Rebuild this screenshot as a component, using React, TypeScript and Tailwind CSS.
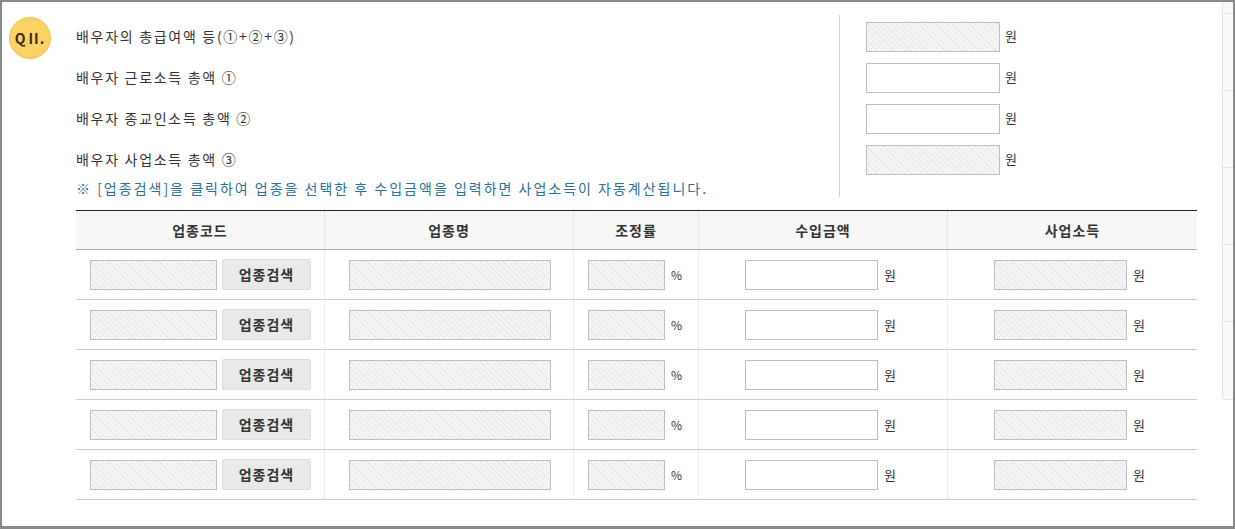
import React from "react";

const font = { fontFamily: '"Noto Sans CJK KR", "Noto Sans", sans-serif' };

function Hatch({ w }: { w: string }) {
  return (
    <div
      className={`${w} h-[30px] border border-[#bdbdbd] bg-[repeating-linear-gradient(45deg,#f4f4f4_0px,#f4f4f4_3px,#e8e8e8_3px,#e8e8e8_4px)]`}
    />
  );
}

function Plain({ w }: { w: string }) {
  return <div className={`${w} h-[30px] border border-[#bdbdbd] bg-white`} />;
}

const labels = [
  "배우자의 총급여액 등(①+②+③)",
  "배우자 근로소득 총액 ①",
  "배우자 종교인소득 총액 ②",
  "배우자 사업소득 총액 ③",
];

export default function App() {
  const rows = [0, 1, 2, 3, 4];
  return (
    <div
      style={font}
      className="relative w-[1235px] h-[529px] overflow-hidden bg-white border-t-2 border-l-2 border-r-2 border-b-[3px] border-[#8a8a8a] text-[#333]"
    >
      {/* peeking side panel */}
      <div className="absolute right-0 top-0 w-[11px] h-[398px] bg-[#f8f9fc] border-l border-b border-[#e3e3e3] rounded-bl-[4px] flex flex-col">
        <div className="h-[12px] border-b border-[#e3e3e3]" />
        <div className="h-[77px] border-b border-[#e3e3e3]" />
        <div className="h-[77px] border-b border-[#e3e3e3]" />
        <div className="h-[77px] border-b border-[#e3e3e3]" />
        <div className="h-[77px] border-b border-[#e3e3e3]" />
      </div>

      <div className="flex pt-[13px]">
        <div className="w-[74px] pl-[7px] pt-[2px]">
          <div className="w-[42px] h-[42px] rounded-full bg-[#fcd264] border border-[#f0c050] flex items-center justify-center text-[14px] font-bold text-[#3a2a10]">
            <span>Q</span>
            <span className="ml-[3px] tracking-[1px]">II.</span>
          </div>
        </div>
        <div className="w-[763px] pt-[7px]">
          <div className="flex flex-col gap-[11px]">
            {labels.map((l) => (
              <div key={l} className="h-[30px] flex items-center text-[14px] tracking-[1.7px] leading-[16px] pb-[2px]">
                {l}
              </div>
            ))}
          </div>
          <div className="mt-[5px] h-[16px] leading-[16px] text-[14px] tracking-[2px] text-[#2b7096]">
            ※ [업종검색]을 클릭하여 업종을 선택한 후 수입금액을 입력하면 사업소득이 자동계산됩니다.
          </div>
        </div>
        <div className="w-px h-[182px] bg-[#cfcfcf]" />
        <div className="pl-[26px] pt-[7px] flex flex-col gap-[11px]">
          {[true, false, false, true].map((h, i) => (
            <div key={i} className="h-[30px] flex items-center gap-[5px]">
              {h ? <Hatch w="w-[134px]" /> : <Plain w="w-[134px]" />}
              <span className="text-[13px] leading-[16px] pb-[2px]">원</span>
            </div>
          ))}
        </div>
      </div>

      <div className="ml-[74px] mt-[13px] w-[1121px] border-t border-[#222]">
        <div className="grid grid-cols-[249px_249px_125px_249px_249px] h-[39px] bg-[#f7f7f7] border-b border-[#a8a8a8] text-[14px] font-bold">
          {["업종코드", "업종명", "조정률", "수입금액", "사업소득"].map((h, i) => (
            <div
              key={h}
              className={`flex items-center justify-center tracking-[1px] ${i < 4 ? "border-r border-[#e6e6e6]" : ""}`}
            >
              {h}
            </div>
          ))}
        </div>
        {rows.map((r) => (
          <div
            key={r}
            className="grid grid-cols-[249px_249px_125px_249px_249px] h-[50px] border-b border-[#cccccc]"
          >
            <div className="flex items-center pl-[14px] gap-[5px] border-r border-[#ececec]">
              <Hatch w="w-[127px]" />
              <div className="w-[89px] h-[31px] rounded-[2px] bg-[#e9e9e9] border border-[#dcdcdc] flex items-center justify-center text-[14px] font-bold tracking-[1px]">
                업종검색
              </div>
            </div>
            <div className="flex items-center pl-[24px] border-r border-[#ececec]">
              <Hatch w="w-[202px]" />
            </div>
            <div className="flex items-center pl-[14px] gap-[6px] border-r border-[#ececec]">
              <Hatch w="w-[77px]" />
              <span className="text-[12px]">%</span>
            </div>
            <div className="flex items-center pl-[46px] gap-[6px] border-r border-[#ececec]">
              <Plain w="w-[133px]" />
              <span className="text-[13px]">원</span>
            </div>
            <div className="flex items-center pl-[46px] gap-[6px]">
              <Hatch w="w-[133px]" />
              <span className="text-[13px]">원</span>
            </div>
          </div>
        ))}
      </div>
    </div>
  );
}
